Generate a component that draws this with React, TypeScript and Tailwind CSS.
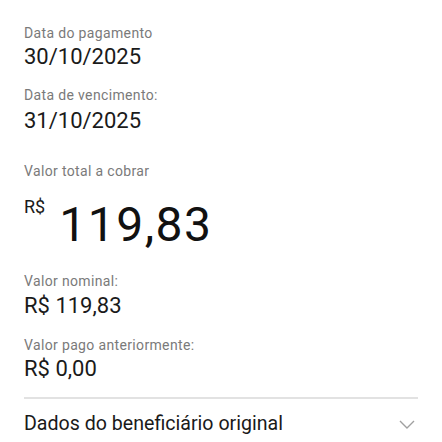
import React from 'react'

const Label: React.FC<{ children: React.ReactNode; className?: string }> = ({ children, className = '' }) => (
  <p className={`text-[14px] leading-[20px] tracking-[0.35px] text-[#7a7a7a] ${className}`}>{children}</p>
)

const Value: React.FC<{ children: React.ReactNode; className?: string }> = ({ children, className = '' }) => (
  <p className={`text-[22px] leading-[28px] text-[#1a1a1a] ${className}`}>{children}</p>
)

const App: React.FC = () => {
  return (
    <div className="w-[442px] h-[442px] bg-white overflow-hidden font-['Roboto',sans-serif]">
      <div className="px-6 pt-[23px]">
        <Label>Data do pagamento</Label>
        <Value>30/10/2025</Value>
        <Label className="mt-[14px]">Data de vencimento:</Label>
        <Value className="mt-[2px]">31/10/2025</Value>

        <Label className="mt-[26px]">Valor total a cobrar</Label>
        <div className="flex items-start mt-[14px]">
          <span className="text-[18px] leading-[24px] text-[#1a1a1a]">R$</span>
          <span className="ml-[14px] mt-[6px] text-[48px] leading-[48px] tracking-[1.5px] text-[#111]">119,83</span>
        </div>

        <Label className="mt-[22px]">Valor nominal:</Label>
        <Value className="mt-[1px]">R$ 119,83</Value>
        <Label className="mt-[15px]">Valor pago anteriormente:</Label>
        <Value className="leading-[24px]">R$ 0,00</Value>

        <div className="mt-[14px] h-[2px] bg-[#e2e2e2] w-[394px]" />
        <div className="flex items-center justify-between w-[394px] pt-[13px] pb-[10px]">
          <span className="text-[19.6px] leading-[24px] text-[#1a1a1a]">Dados do beneficiário original</span>
          <svg width="16" height="9" viewBox="0 0 16 9" fill="none" className="mr-[3px]">
            <path d="M1 1l7 7 7-7" stroke="#a0a0a0" strokeWidth="1.4" />
          </svg>
        </div>
      </div>
    </div>
  )
}

export default App
